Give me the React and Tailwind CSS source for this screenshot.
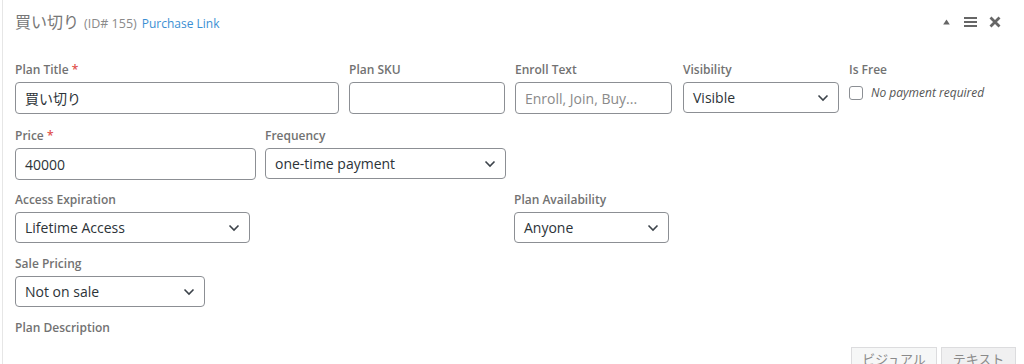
import React from "react";

const font = { fontFamily: '"Open Sans", "Noto Sans", "Noto Sans CJK JP", sans-serif' };

function Label({ children, req }) {
  return (
    <div className="text-[12px] leading-[16px] font-semibold text-[#727272] mb-[4px] whitespace-nowrap">
      {children}
      {req && <span className="text-[#e0504d]"> *</span>}
    </div>
  );
}

function Chevron() {
  return (
    <svg width="12" height="8" viewBox="0 0 12 8" className="shrink-0">
      <path d="M1.5 1.5 L6 6 L10.5 1.5" fill="none" stroke="#3c434a" strokeWidth="1.6" />
    </svg>
  );
}

function Input({ value, placeholder, w }) {
  return (
    <div className={`${w} h-[32px] border border-[#8c8f94] rounded-[4px] bg-white px-[9px] flex items-center text-[14px] ${value ? "text-[#2c3338]" : "text-[#8a8a8a]"}`}>
      {value || placeholder}
    </div>
  );
}

function Select({ value, w }) {
  return (
    <div className={`${w} h-[31px] border border-[#8c8f94] rounded-[4px] bg-white pl-[9px] pr-[9px] flex items-center justify-between text-[14px] text-[#2c3338]`}>
      <span>{value}</span>
      <Chevron />
    </div>
  );
}

export default function App() {
  return (
    <div style={font} className="w-[1024px] h-[364px] overflow-hidden bg-white relative">
      <div className="ml-[2px] h-full border-l border-[#e6e6e6] pl-[12px] pr-[22px]">
        <div className="h-[62px] pt-[11px] flex items-start justify-between">
          <div className="flex items-baseline gap-[5px] leading-[22px]">
            <span className="text-[16px] text-[#777]">買い切り</span>
            <span className="text-[12.5px] text-[#8a8a8a]">(ID# 155)</span>
            <span className="text-[12px] text-[#3b8fd3]">Purchase Link</span>
          </div>
          <div className="flex items-center gap-[9px] pt-[5px] pr-[1px]">
            <svg width="7" height="6" viewBox="0 0 7 6"><path d="M3.5 0.5 L6.8 5.5 L0.2 5.5 Z" fill="#666" /></svg>
            <svg width="13" height="12" viewBox="0 0 13 12" className="ml-[5px]">
              <rect x="0" y="1" width="13" height="2" fill="#666" />
              <rect x="0" y="5" width="13" height="2" fill="#666" />
              <rect x="0" y="9" width="13" height="2" fill="#666" />
            </svg>
            <svg width="12" height="12" viewBox="0 0 12 12" className="ml-[3px]">
              <path d="M1.5 1.5 L10.5 10.5 M10.5 1.5 L1.5 10.5" stroke="#666" strokeWidth="2.8" strokeLinecap="butt" />
            </svg>
          </div>
        </div>

        <div className="flex items-start gap-[10px] mb-[14px]">
          <div><Label req>Plan Title</Label><Input value="買い切り" w="w-[324px]" /></div>
          <div><Label>Plan SKU</Label><Input w="w-[156px]" /></div>
          <div><Label>Enroll Text</Label><Input placeholder="Enroll, Join, Buy..." w="w-[157px]" /></div>
          <div className="ml-[1px]"><Label>Visibility</Label><Select value="Visible" w="w-[156px]" /></div>
          <div>
            <Label>Is Free</Label>
            <div className="flex items-center gap-[8px] h-[22px]">
              <div className="w-[14px] h-[14px] border border-[#8c8f94] rounded-[3px] bg-white" />
              <span className="text-[12px] italic text-[#555]">No payment required</span>
            </div>
          </div>
        </div>

        <div className="flex items-start gap-[9px] mb-[12px]">
          <div><Label req>Price</Label><Input value="40000" w="w-[241px]" /></div>
          <div><Label>Frequency</Label><Select value="one-time payment" w="w-[241px]" /></div>
        </div>

        <div className="flex items-start mb-[13px]">
          <div className="w-[499px]"><Label>Access Expiration</Label><Select value="Lifetime Access" w="w-[235px]" /></div>
          <div><Label>Plan Availability</Label><Select value="Anyone" w="w-[155px]" /></div>
        </div>

        <div className="mb-[13px]">
          <Label>Sale Pricing</Label>
          <Select value="Not on sale" w="w-[190px]" />
        </div>

        <Label>Plan Description</Label>
      </div>

      <div className="absolute left-[851px] top-[347px] flex gap-[4px]">
        <div className="w-[86px] h-[26px] bg-[#f6f7f7] border border-[#dcdcde] text-[13px] text-[#8a8a8a] flex justify-center pt-[2px]">ビジュアル</div>
        <div className="w-[75px] h-[26px] bg-[#f0f0f1] border border-[#dcdcde] text-[13px] text-[#8a8a8a] flex justify-center pt-[2px]">テキスト</div>
      </div>
    </div>
  );
}
